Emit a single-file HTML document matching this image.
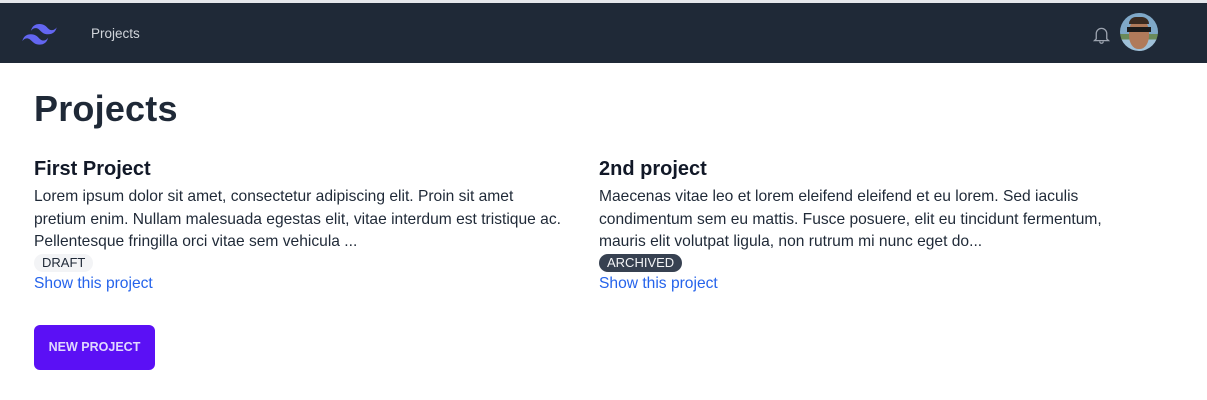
<!DOCTYPE html>
<html><head><meta charset="utf-8"><style>
*{margin:0;padding:0;box-sizing:border-box}
body{width:1207px;height:400px;background:#fff;font-family:"Liberation Sans",sans-serif;color:#1f2937;overflow:hidden;position:relative}
.top{height:3px;background:#e5e7eb}
nav{height:60px;background:#1f2937;position:relative}
nav .link{position:absolute;left:91px;top:23px;color:#d1d5db;font-size:13.5px}
h1{position:absolute;left:34px;top:88px;font-size:36px;font-weight:bold;color:#1f2937;letter-spacing:0.2px}
.card{position:absolute;top:157px;width:580px;white-space:nowrap}
.card h2{font-size:20px;font-weight:bold;color:#111827;line-height:24px}
.card p{font-size:15.6px;line-height:22.5px;color:#1f2937;margin-top:5px}
.badge{display:inline-block;font-size:13px;line-height:18px;padding:0 8px;border-radius:9px;margin-top:0}
.show{display:block;color:#2563eb;font-size:15.6px;margin-top:3px}
.btn{position:absolute;left:34px;top:325px;width:121px;height:45px;background:#5b10f5;border-radius:6px;color:#e0d8ff;font-size:12.5px;font-weight:bold;text-align:center;line-height:45px}
</style></head><body>
<div class="top"></div>
<nav>
<svg style="position:absolute;left:22px;top:21px" width="35" height="21" viewBox="0 0 54 33"><path fill="#6366f1" d="M27 0c-7.2 0-11.7 3.6-13.5 10.8 2.7-3.6 5.85-4.95 9.45-4.05 2.054.513 3.522 2.004 5.147 3.653C30.744 13.09 33.808 16.2 40.5 16.2c7.2 0 11.7-3.6 13.5-10.8-2.7 3.6-5.850 4.95-9.450 4.050-2.054-.513-3.522-2.004-5.147-3.653C36.756 3.11 33.692 0 27 0zM13.500 16.200C6.300 16.200 1.800 19.800 0 27c2.700-3.600 5.850-4.950 9.450-4.050 2.054.514 3.522 2.004 5.147 3.653C17.244 29.290 20.308 32.400 27 32.400c7.200 0 11.700-3.600 13.500-10.800-2.700 3.600-5.850 4.950-9.450 4.050-2.054-.513-3.522-2.004-5.147-3.653C23.256 19.310 20.192 16.200 13.500 16.200z"/></svg>
<span class="link">Projects</span>
<svg style="position:absolute;left:1091px;top:20px" width="21" height="23" viewBox="0 0 24 24" fill="none" stroke="#9ca3af" stroke-width="1.5"><path d="M6 17V11a6 6 0 0 1 12 0v6l2 2H4z"/><path d="M10 20a2 2 0 0 0 4 0"/></svg>
<div style="position:absolute;left:1120px;top:10px;width:38px;height:38px;border-radius:50%;background:linear-gradient(#7fa8c8 0 55%,#6a8a5a 55% 70%,#9fc0d8 70%);overflow:hidden"><div style="position:absolute;left:9px;top:6px;width:20px;height:30px;border-radius:45%;background:#b07a5a"></div><div style="position:absolute;left:9px;top:4px;width:20px;height:7px;border-radius:8px 8px 0 0;background:#3a2a20"></div><div style="position:absolute;left:7px;top:14px;width:24px;height:5px;background:#1a1a1a"></div></div>
</nav>
<h1>Projects</h1>
<div class="card" style="left:34px">
<h2>First Project</h2>
<p>Lorem ipsum dolor sit amet, consectetur adipiscing elit. Proin sit amet<br>pretium enim. Nullam malesuada egestas elit, vitae interdum est tristique ac.<br>Pellentesque fringilla orci vitae sem vehicula ...</p>
<span class="badge" style="background:#f3f4f6;color:#1f2937">DRAFT</span>
<a class="show">Show this project</a>
</div>
<div class="card" style="left:599px">
<h2>2nd project</h2>
<p>Maecenas vitae leo et lorem eleifend eleifend et eu lorem. Sed iaculis<br>condimentum sem eu mattis. Fusce posuere, elit eu tincidunt fermentum,<br>mauris elit volutpat ligula, non rutrum mi nunc eget do...</p>
<span class="badge" style="background:#374151;color:#f3f4f6">ARCHIVED</span>
<a class="show">Show this project</a>
</div>
<div class="btn">NEW PROJECT</div>
</body></html>
